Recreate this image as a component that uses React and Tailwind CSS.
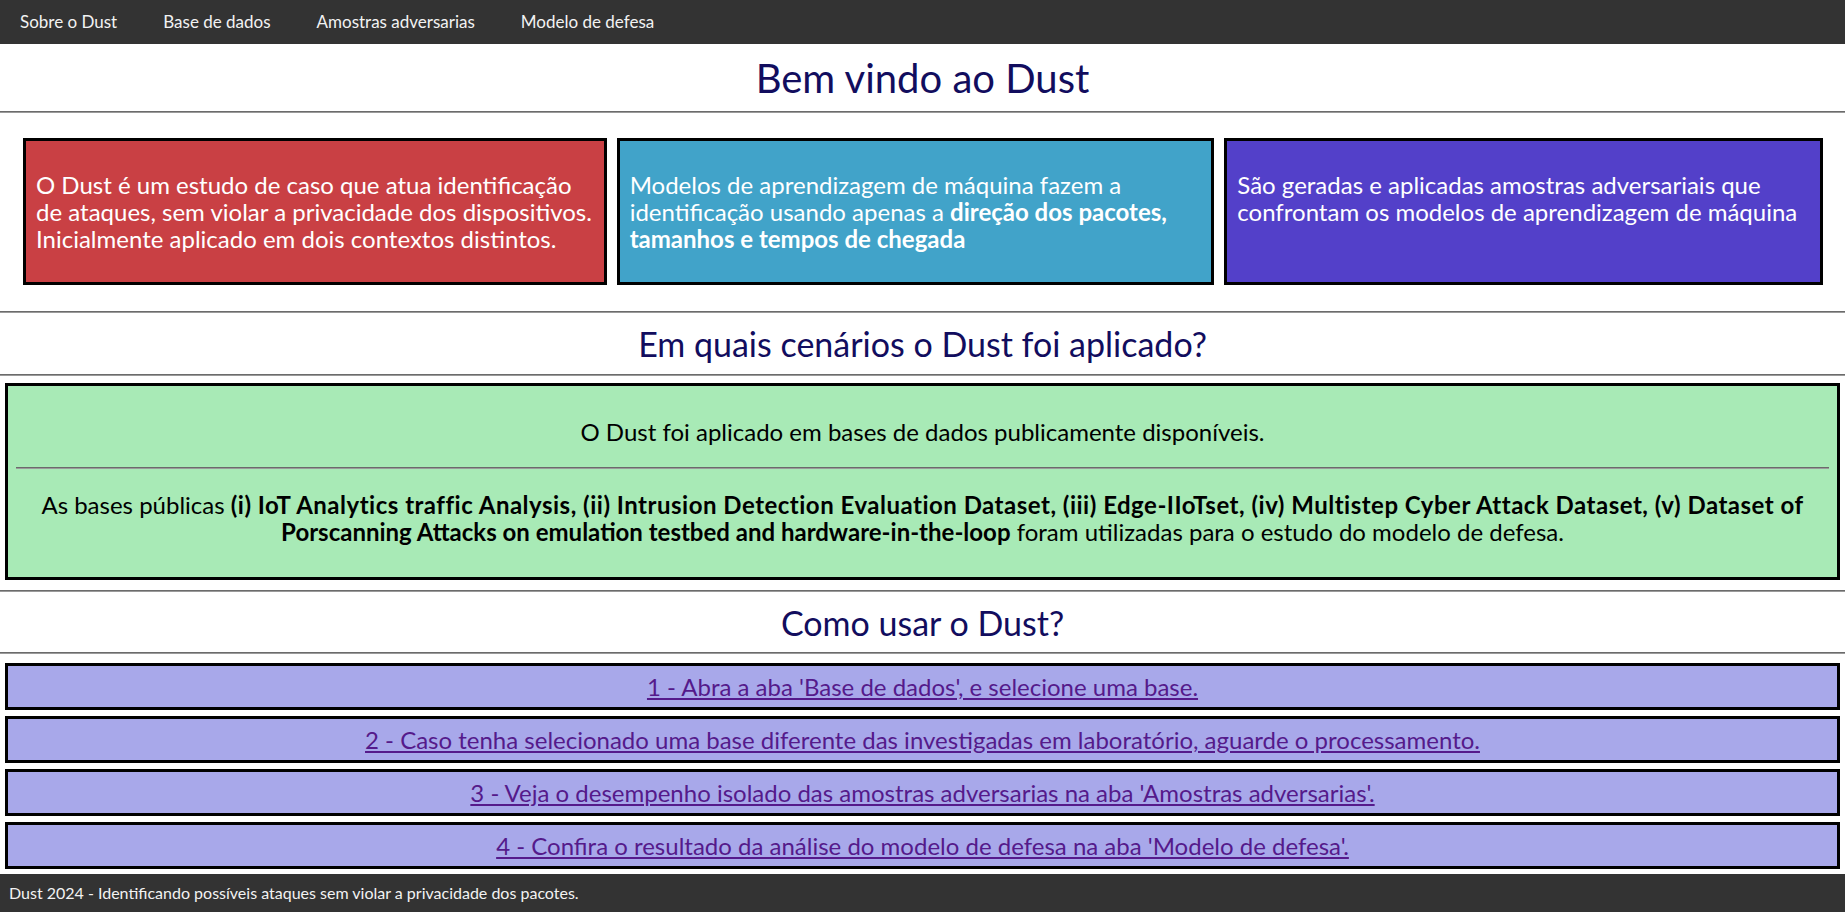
import React from 'react';

const navLinks = ['Sobre o Dust', 'Base de dados', 'Amostras adversarias', 'Modelo de defesa'];

const steps = [
    "1 - Abra a aba 'Base de dados', e selecione uma base.",
    '2 - Caso tenha selecionado uma base diferente das investigadas em laboratório, aguarde o processamento.',
    "3 - Veja o desempenho isolado das amostras adversarias na aba 'Amostras adversarias'.",
    "4 - Confira o resultado da análise do modelo de defesa na aba 'Modelo de defesa'.",
];

const Rule = () => <div className="h-[2px] w-full border-t border-[#6b6b6b] bg-[#9a9a9a]" />;

const App = () => {
    return (
        <div className="min-h-screen bg-white font-['Lato',sans-serif] flex flex-col">
            {/* Top navigation */}
            <nav className="bg-[#333333] h-[44px] flex items-center gap-[6px]">
                {navLinks.map((link) => (
                    <a key={link} href="#" className="px-[20px] text-[17px] text-[#f2f2f2]">
                        {link}
                    </a>
                ))}
            </nav>

            <h1 className="h-[67px] flex items-center justify-center text-[40px] text-[#120d5e]">Bem vindo ao Dust</h1>
            <Rule />

            {/* Intro cards */}
            <div className="grid grid-cols-[583fr_597fr_598fr] gap-[10px] pl-[23px] pr-[22px] pt-[25px] pb-[26px]">
                <div className="bg-[#c94044] border-[3px] border-black px-[10px] py-[30px] text-white text-[24px] leading-[27px] whitespace-nowrap">
                    O Dust é um estudo de caso que atua identificação<br />
                    de ataques, sem violar a privacidade dos dispositivos.<br />
                    Inicialmente aplicado em dois contextos distintos.
                </div>
                <div className="bg-[#41a3c9] border-[3px] border-black px-[10px] py-[30px] text-white text-[24px] leading-[27px] whitespace-nowrap">
                    Modelos de aprendizagem de máquina fazem a<br />
                    identificação usando apenas a <b>direção dos pacotes,</b><br />
                    <b>tamanhos e tempos de chegada</b>
                </div>
                <div className="bg-[#5340c9] border-[3px] border-black px-[10px] py-[30px] text-white text-[24px] leading-[27px] whitespace-nowrap">
                    São geradas e aplicadas amostras adversariais que<br />
                    confrontam os modelos de aprendizagem de máquina
                </div>
            </div>
            <Rule />

            <h2 className="h-[61px] flex items-center justify-center text-[34px] text-[#120d5e]">Em quais cenários o Dust foi aplicado?</h2>
            <Rule />

            {/* Datasets */}
            <div className="px-[5px] pt-[7px] pb-[10px]">
                <div className="bg-[#a8eab6] border-[3px] border-black px-[8px] py-[10px] text-black text-[24px] leading-[27px] text-center">
                    <p className="my-[22px]">O Dust foi aplicado em bases de dados publicamente disponíveis.</p>
                    <Rule />
                    <p className="my-[22px] whitespace-nowrap">
                        As bases públicas <b className="tracking-[0.5px]">(i) IoT Analytics traffic Analysis, (ii) Intrusion Detection Evaluation Dataset, (iii) Edge-IIoTset, (iv) Multistep Cyber Attack Dataset, (v) Dataset of</b>
                        <br />
                        <b>Porscanning Attacks on emulation testbed and hardware-in-the-loop</b> foram utilizadas para o estudo do modelo de defesa.
                    </p>
                </div>
            </div>
            <Rule />

            <h2 className="h-[60px] flex items-center justify-center text-[34px] text-[#120d5e]">Como usar o Dust?</h2>
            <Rule />

            {/* Steps */}
            <div className="px-[5px] pt-[9px] pb-[5px] flex flex-col gap-[6px]">
                {steps.map((step) => (
                    <div key={step} className="bg-[#a8a8ea] border-[3px] border-black h-[47px] flex items-center justify-center text-[24px] leading-[28px]">
                        <a href="#" className="underline text-[#551a8b]">{step}</a>
                    </div>
                ))}
            </div>

            <footer className="bg-[#333333] h-[38px] flex items-center px-[9px] text-[16px] text-[#f2f2f2]">
                Dust 2024 - Identificando possíveis ataques sem violar a privacidade dos pacotes.
            </footer>
        </div>
    );
};

export default App;
